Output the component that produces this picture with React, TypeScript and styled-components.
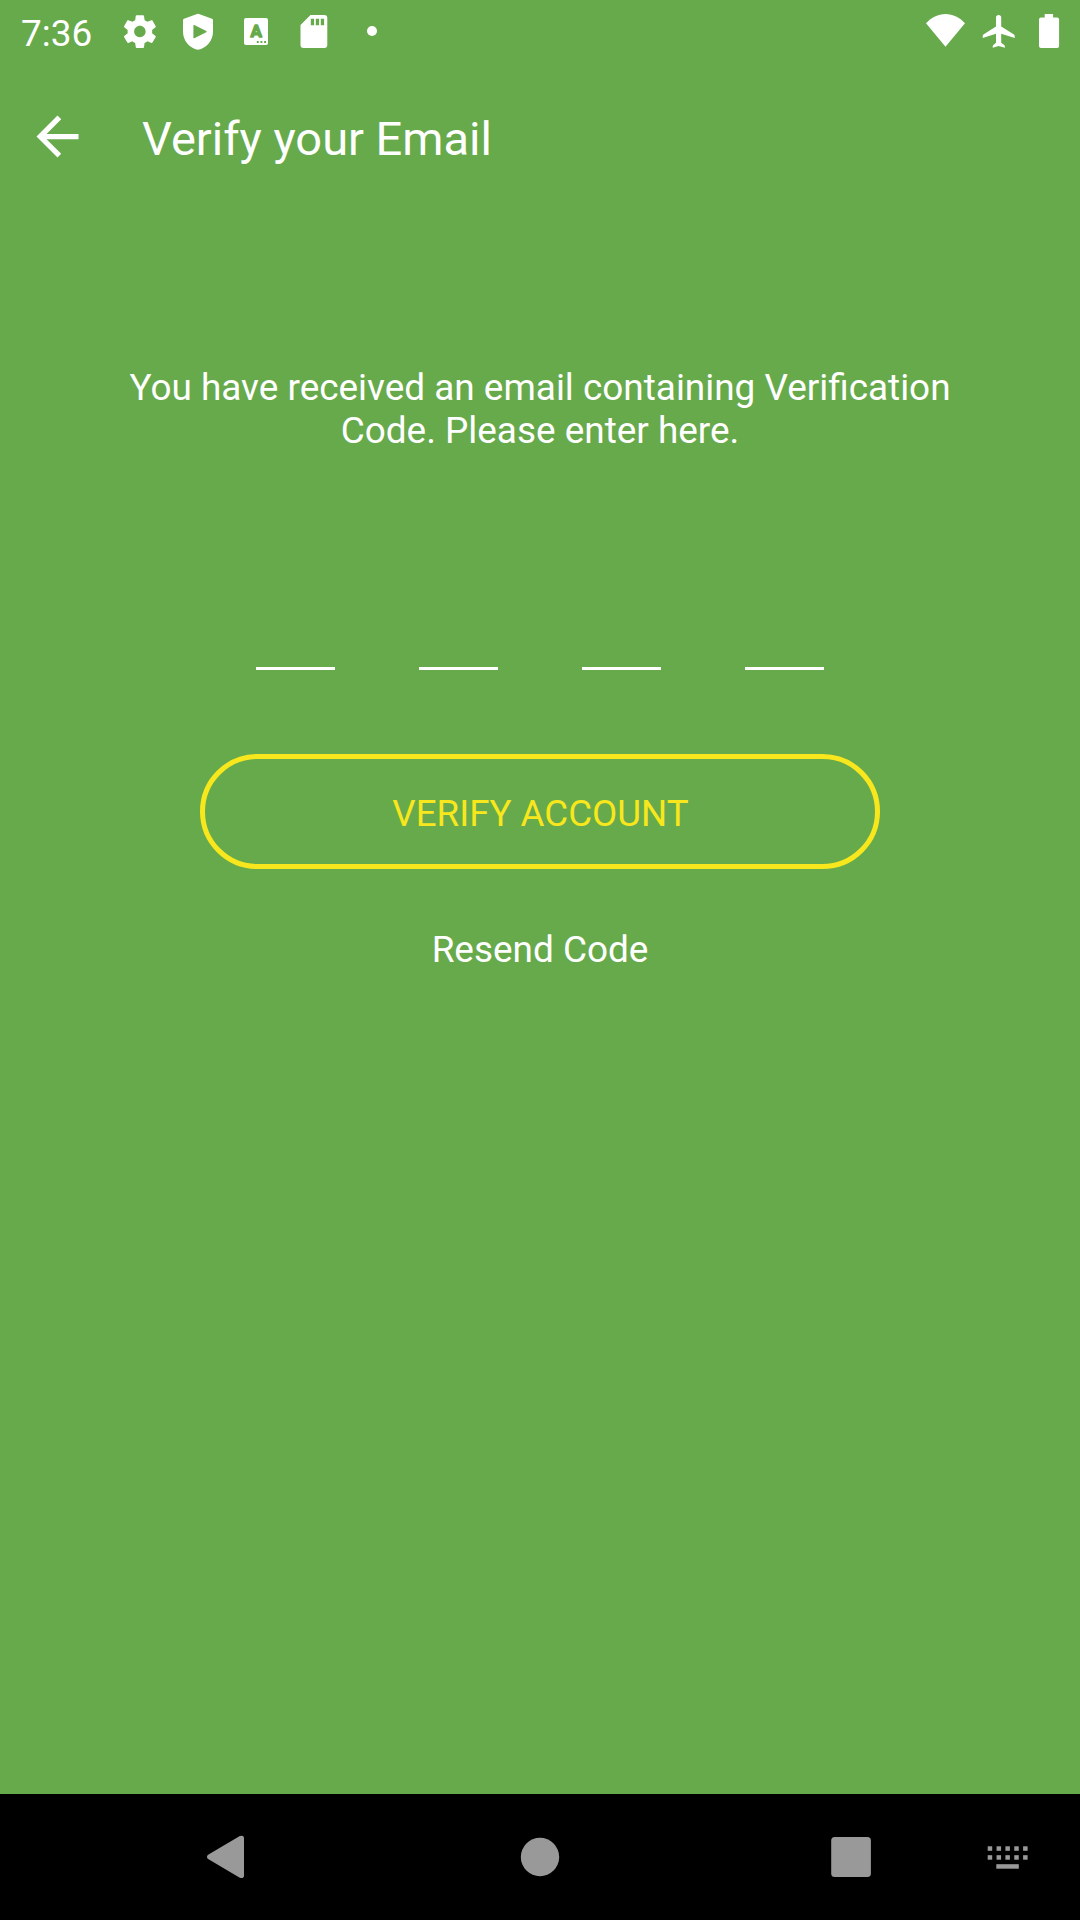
import React from "react";
import styled, { createGlobalStyle } from "styled-components";

const green = "#67aa4b";
const yellow = "#f8e71c";
const navGrey = "#999999";

const GlobalStyle = createGlobalStyle`
  html, body { margin: 0; padding: 0; background: ${green}; }
  *, *::before, *::after { box-sizing: border-box; }
`;

const Screen = styled.div`
  width: 1080px;
  height: 1920px;
  display: flex;
  flex-direction: column;
  overflow: hidden;
  background: ${green};
  color: #fff;
  font-family: Roboto, "Liberation Sans", sans-serif;
  font-size: 36.92px;
  line-height: 43px;
`;

const StatusBar = styled.header`
  height: 63px;
  display: flex;
  justify-content: space-between;
  padding: 0 16px 0 21px;
`;

const StatusGroup = styled.div`
  display: flex;
`;

const Clock = styled.span`
  width: 90px;
  padding-top: 12px;
  white-space: nowrap;
`;

const Glyph = styled.svg<{ $w: number; $h: number }>`
  display: block;
  flex: none;
  width: ${(p) => p.$w}px;
  height: ${(p) => p.$h}px;
`;

const AppBar = styled.div`
  height: 147px;
  display: flex;
  align-items: center;
  padding-left: 26px;
`;

const IconButton = styled.button`
  padding: 0;
  border: 0;
  background: none;
  color: inherit;
`;

const Title = styled.h1`
  margin: 5px 0 0 53px;
  font-size: 47px;
  line-height: 56px;
  font-weight: 400;
  white-space: nowrap;
`;

const Content = styled.main`
  flex: 1;
  display: flex;
  flex-direction: column;
  align-items: center;
`;

const Message = styled.p`
  width: 860px;
  margin: 156px 0 0;
  text-align: center;
`;

const CodeRow = styled.div`
  display: flex;
  gap: 84px;
  margin-top: 118px;
`;

const CodeInput = styled.input`
  width: 79px;
  height: 100px;
  padding: 0;
  border: 0;
  border-bottom: 3px solid #fff;
  border-radius: 0;
  outline: 0;
  background: transparent;
  color: #fff;
  font: inherit;
  text-align: center;
`;

const VerifyButton = styled.button`
  width: 680px;
  height: 115px;
  margin-top: 84px;
  padding: 4px 0 0 1px;
  border: 5px solid ${yellow};
  border-radius: 58px;
  background: transparent;
  color: ${yellow};
  font: inherit;
  font-size: 36.7px;
`;

const ResendLink = styled.button`
  margin-top: 59px;
  padding: 0;
  border: 0;
  background: none;
  color: inherit;
  font: inherit;
`;

const NavBar = styled.nav`
  height: 126px;
  display: flex;
  gap: 250px;
  padding-left: 194px;
  background: #000;
  color: ${navGrey};
`;

const NavEnd = styled.div`
  display: flex;
  margin-left: -3px;
`;

const keyColumns = [0, 1, 2, 3, 4];

export default function App() {
  return (
    <>
      <GlobalStyle />
      <Screen>
        <StatusBar>
          <StatusGroup>
            <Clock>7:36</Clock>
            <Glyph $w={58} $h={63} viewBox="111 0 58 63" fill="#fff">
              <path
                transform="translate(120.2 11.9) scale(1.64)"
                d="M19.43 12.98c.04-.32.07-.64.07-.98s-.03-.66-.07-.98l2.11-1.65c.19-.15.24-.42.12-.64l-2-3.46c-.12-.22-.39-.3-.61-.22l-2.49 1c-.52-.4-1.08-.73-1.69-.98l-.38-2.65C14.46 2.18 14.25 2 14 2h-4c-.25 0-.46.18-.49.42l-.38 2.65c-.61.25-1.17.59-1.69.98l-2.49-1c-.23-.09-.49 0-.61.22l-2 3.46c-.13.22-.07.49.12.64l2.11 1.65c-.04.32-.07.65-.07.98s.03.66.07.98l-2.11 1.65c-.19.15-.24.42-.12.64l2 3.46c.12.22.39.3.61.22l2.49-1c.52.4 1.08.73 1.69.98l.38 2.65c.03.24.24.42.49.42h4c.25 0 .46-.18.49-.42l.38-2.65c.61-.25 1.17-.59 1.69-.98l2.49 1c.23.09.49 0 .61-.22l2-3.46c.12-.22.07-.49-.12-.64l-2.11-1.65zM12 15.5c-1.93 0-3.5-1.57-3.5-3.5s1.57-3.5 3.5-3.5 3.5 1.57 3.5 3.5-1.57 3.5-3.5 3.5z"
              />
            </Glyph>
            <Glyph $w={58} $h={63} viewBox="169 0 58 63" fill="#fff">
              <path d="M197 14Q198 13.5 199 14L212 18.8Q213 19.2 213 20.3V31.5C213 41 206.5 48 198 49.8C189.5 48 183 41 183 31.5V20.3Q183 19.2 184 18.8Z" />
              <path
                d="M194 25.5L206 31.6L194 37.7Z"
                fill={green}
                stroke={green}
                strokeWidth="1.2"
                strokeLinejoin="round"
              />
            </Glyph>
            <Glyph $w={58} $h={63} viewBox="227 0 58 63" fill="#fff">
              <rect x="244" y="18" width="24" height="27" rx="2" />
              <text
                x="256.1"
                y="37.1"
                textAnchor="middle"
                fontFamily="Roboto, sans-serif"
                fontSize="17"
                fontWeight="700"
                fill={green}
                stroke={green}
                strokeWidth="1.4"
                strokeLinejoin="round"
              >
                A
              </text>
              <path d="M256.8 41h1.9v1.9h-1.9zM260.500 41h1.900v1.900h-1.900zM264.100 41h1.900v1.900h-1.900z" fill={green} />
            </Glyph>
            <Glyph $w={58} $h={63} viewBox="285 0 58 63" fill="#fff">
              <path
                fillRule="evenodd"
                d="M310.500 15H324.300Q327.300 15 327.300 18V45Q327.300 48 324.300 48H303.500Q300.500 48 300.500 45V25ZM310.800 18.800v6.500h3.300V18.800ZM315.800 18.800v6.500h3.300V18.800ZM320.800 18.800v6.500h3.300V18.800Z"
              />
            </Glyph>
            <Glyph $w={58} $h={63} viewBox="343 0 58 63" fill="#fff">
              <circle cx="372" cy="31" r="5" />
            </Glyph>
          </StatusGroup>
          <StatusGroup>
            <Glyph $w={52} $h={63} viewBox="920 0 52 63" fill="#fff">
              <path d="M926 23.200C931.500 17.500 938 14 945.500 14S959.500 17.500 965 23.200L945.500 46.700Z" />
            </Glyph>
            <Glyph $w={52} $h={63} viewBox="972 0 52 63" fill="#fff">
              <path d="M996 17.500a2.600 2.600 0 0 1 5.200 0V26.500L1013.600 34.200Q1014.700 34.900 1014.700 36V37.900L1001.200 33.700V42.700L1004.200 45Q1004.900 45.500 1004.900 46.500V47.800L998.600 46L992.700 47.800V46.500Q992.700 45.500 993.400 45L996 42.700V33.700L982.700 37.900V36Q982.700 34.900 983.800 34.200L996 26.500Z" />
            </Glyph>
            <Glyph $w={40} $h={63} viewBox="1024 0 40 63" fill="#fff">
              <path d="M1044.700 14h8.400v3.400h4q2 0 2 2v26.500q0 2-2 2h-16.100q-2 0-2-2v-26.500q0-2 2-2h3.700z" />
            </Glyph>
          </StatusGroup>
        </StatusBar>

        <AppBar>
          <IconButton aria-label="Back">
            <Glyph $w={63} $h={63} viewBox="0 0 24 24" fill="currentColor">
              <path d="M20 11H7.830l5.590-5.590L12 4l-8 8 8 8 1.410-1.410L7.830 13H20z" />
            </Glyph>
          </IconButton>
          <Title>Verify your Email</Title>
        </AppBar>

        <Content>
          <Message>
            You have received an email containing Verification
            <br />
            Code. Please enter here.
          </Message>
          <CodeRow>
            {[1, 2, 3, 4].map((digit) => (
              <CodeInput key={digit} maxLength={1} inputMode="numeric" aria-label={`Digit ${digit}`} />
            ))}
          </CodeRow>
          <VerifyButton>VERIFY ACCOUNT</VerifyButton>
          <ResendLink>Resend Code</ResendLink>
        </Content>

        <NavBar>
          <Glyph $w={64} $h={126} viewBox="194 1794 64 126" fill="currentColor">
            <path d="M207.700 1855L239.800 1836.100Q244 1834.600 244 1838.500V1875.300Q244 1879.200 239.800 1877.700L207.700 1858.800Q206 1857 207.700 1855Z" />
          </Glyph>
          <Glyph $w={64} $h={126} viewBox="508 1794 64 126" fill="currentColor">
            <circle cx="540" cy="1857" r="19.200" />
          </Glyph>
          <NavEnd>
            <Glyph $w={64} $h={126} viewBox="819 1794 64 126" fill="currentColor">
              <rect x="831.200" y="1837" width="39.700" height="40" rx="3.500" />
            </Glyph>
            <Glyph $w={156} $h={126} viewBox="883 1794 156 126" fill="currentColor">
              {keyColumns.map((column) => (
                <React.Fragment key={column}>
                  <rect x={987.7 + column * 8.85} y="1846.300" width="4.500" height="4.500" />
                  <rect x={987.7 + column * 8.85} y="1855.200" width="4.500" height="4.500" />
                </React.Fragment>
              ))}
              <rect x="996.300" y="1864.200" width="22.500" height="4.500" />
            </Glyph>
          </NavEnd>
        </NavBar>
      </Screen>
    </>
  );
}
